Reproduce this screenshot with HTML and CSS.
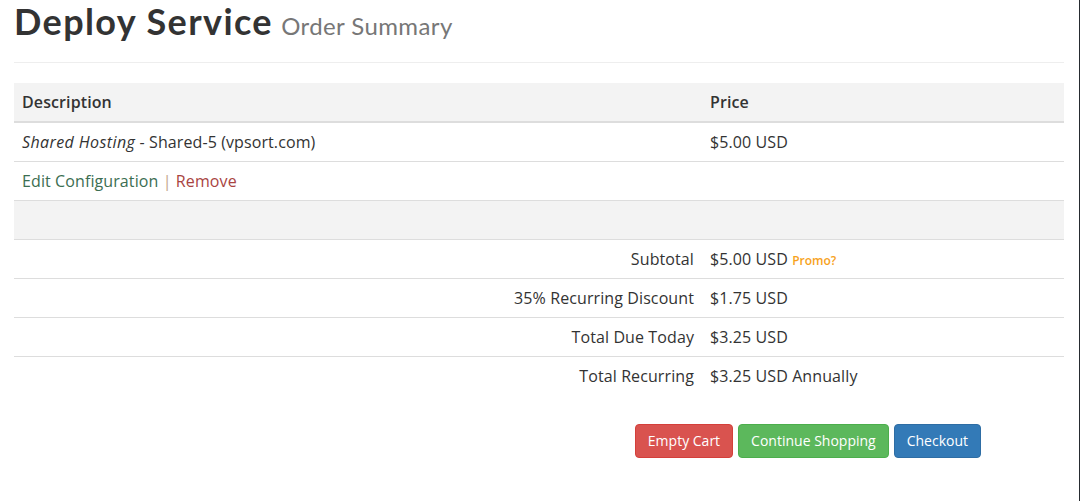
FILE: index.html
```html
<!DOCTYPE html>
<html>
	<head>
		<meta charset="UTF-8">
		<title>Order Summary</title>
		<link rel="stylesheet" href="styles.css">
	</head>
	<body>
		<div class="wrap">
			<h1 class="title">Deploy Service <small>Order Summary</small></h1>
			<hr>
			<table class="cart">
				<thead>
					<tr>
						<th class="col-desc">Description</th>
						<th>Price</th>
					</tr>
				</thead>
				<tbody>
					<tr>
						<td><em>Shared Hosting</em> - Shared-5 (vpsort.com)</td>
						<td>$5.00 USD</td>
					</tr>
					<tr>
						<td><a href="javascript:;" class="edit">Edit Configuration</a> <span class="sep">|</span> <a href="javascript:;" class="remove">Remove</a></td>
						<td></td>
					</tr>
					<tr class="gap">
						<td>&nbsp;</td>
						<td></td>
					</tr>
					<tr>
						<td class="label">Subtotal</td>
						<td>$5.00 USD <a href="javascript:;" class="promo">Promo?</a></td>
					</tr>
					<tr>
						<td class="label">35% Recurring Discount</td>
						<td>$1.75 USD</td>
					</tr>
					<tr>
						<td class="label">Total Due Today</td>
						<td>$3.25 USD</td>
					</tr>
					<tr>
						<td class="label">Total Recurring</td>
						<td>$3.25 USD Annually</td>
					</tr>
				</tbody>
			</table>
			<div class="actions">
				<a href="javascript:;" class="btn btn-red">Empty Cart</a>
				<a href="javascript:;" class="btn btn-green">Continue Shopping</a>
				<a href="javascript:;" class="btn btn-blue">Checkout</a>
			</div>
		</div>
	</body>
</html>
```

FILE: styles.css
```css
*{margin: 0;padding: 0;box-sizing: border-box;}
html,body{height: 100%;}
body{font-family: "Open Sans", "Liberation Sans", sans-serif;color: #333;background: #fff;border-right: 1px solid #262b30;}
.wrap{padding: 0 15px 0 14px;}
.title{font-family: Lato, "Open Sans", sans-serif;font-weight: 700;font-size: 36px;line-height: 40px;padding-top: 1px;color: #333;letter-spacing: 1.4px;}
.title small{font-weight: 400;font-size: 24px;color: #777;letter-spacing: 0.4px;margin-left: -2px;}
hr{border: 0;border-top: 1px solid #eee;margin: 16px 0 20px;}
.cart{width: 100%;border-collapse: collapse;font-size: 16px;line-height: 22px;letter-spacing: 0.1px;}
.cart th,.cart td{padding: 8px;text-align: left;border-top: 1px solid #ddd;}
.cart th{background: #f3f3f3;font-weight: 600;border-top: 0;border-bottom: 2px solid #ddd;}
.cart .col-desc{width: 688px;}
.cart td.label{text-align: right;}
.cart .gap td{background: #f3f3f3;}
.cart em{letter-spacing: 0.4px;}
.cart a{text-decoration: none;}
.edit{color: #3c6e52;}
.remove{color: #a94442;}
.sep{color: #c3a58a;}
.promo{color: #f7a21b;font-size: 12px;font-weight: 600;line-height: 1;letter-spacing: 0;}
.actions{display: flex;justify-content: flex-end;gap: 5px;margin: 29px 83px 0 0;}
.btn{display: inline-block;padding: 6px 12px;font-size: 14px;line-height: 20px;border: 1px solid;border-radius: 4px;color: #fff;text-decoration: none;}
.btn-red{background: #d9534f;border-color: #d43f3a;}
.btn-green{background: #5cb85c;border-color: #4cae4c;}
.btn-blue{background: #337ab7;border-color: #2e6da4;}
```
